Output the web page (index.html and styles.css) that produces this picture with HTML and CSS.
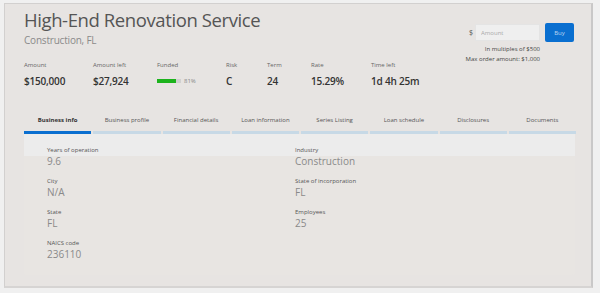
FILE: index.html
```html
<!DOCTYPE html>
<html lang="en">

<head>
    <meta charset="UTF-8">
    <title>High-End Renovation Service</title>
    <link rel="stylesheet" href="styles.css">
</head>

<body>
    <div class="card">
        <div class="top">
            <div class="heading">
                <h1>High-End Renovation Service</h1>
                <div class="subtitle">Construction, FL</div>
            </div>
            <div class="order">
                <div class="order-row">
                    <span class="currency">$</span>
                    <input class="amount" type="text" placeholder="Amount">
                    <button class="buy">Buy</button>
                </div>
                <div class="order-note">In multiples of $500</div>
                <div class="order-note">Max order amount: $1,000</div>
            </div>
        </div>

        <div class="stats">
            <div class="stat s-amount">
                <div class="stat-label">Amount</div>
                <div class="stat-value">$150,000</div>
            </div>
            <div class="stat s-left">
                <div class="stat-label">Amount left</div>
                <div class="stat-value">$27,924</div>
            </div>
            <div class="stat s-funded">
                <div class="stat-label">Funded</div>
                <div class="funded">
                    <div class="bar"><div class="bar-fill" style="width: 81%"></div></div>
                    <span class="funded-pct">81%</span>
                </div>
            </div>
            <div class="stat s-risk">
                <div class="stat-label">Risk</div>
                <div class="stat-value">C</div>
            </div>
            <div class="stat s-term">
                <div class="stat-label">Term</div>
                <div class="stat-value">24</div>
            </div>
            <div class="stat s-rate">
                <div class="stat-label">Rate</div>
                <div class="stat-value">15.29%</div>
            </div>
            <div class="stat s-time">
                <div class="stat-label">Time left</div>
                <div class="stat-value">1d 4h 25m</div>
            </div>
        </div>

        <div class="tabs">
            <div class="tab active">Business info</div>
            <div class="tab">Business profile</div>
            <div class="tab">Financial details</div>
            <div class="tab">Loan information</div>
            <div class="tab">Series Listing</div>
            <div class="tab">Loan schedule</div>
            <div class="tab">Disclosures</div>
            <div class="tab">Documents</div>
        </div>

        <div class="panel">
            <div class="info-row">
                <div class="info">
                    <div class="info-label">Years of operation</div>
                    <div class="info-value">9.6</div>
                </div>
                <div class="info">
                    <div class="info-label">Industry</div>
                    <div class="info-value">Construction</div>
                </div>
            </div>
            <div class="info-row">
                <div class="info">
                    <div class="info-label">City</div>
                    <div class="info-value">N/A</div>
                </div>
                <div class="info">
                    <div class="info-label">State of incorporation</div>
                    <div class="info-value">FL</div>
                </div>
            </div>
            <div class="info-row">
                <div class="info">
                    <div class="info-label">State</div>
                    <div class="info-value">FL</div>
                </div>
                <div class="info">
                    <div class="info-label">Employees</div>
                    <div class="info-value">25</div>
                </div>
            </div>
            <div class="info-row">
                <div class="info">
                    <div class="info-label">NAICS code</div>
                    <div class="info-value">236110</div>
                </div>
            </div>
        </div>
    </div>
</body>

</html>
```

FILE: styles.css
```css
body {
    margin: 0;
    padding: 3px 7px 6px 4px;
    background: #f0f0f0;
    font-family: 'Open Sans', 'Noto Sans', sans-serif;
    color: #333;
}

.card {
    background: #e7e4e2;
    border: 1px solid #d2d0cf;
    border-right: 2px solid #c9c8c8;
    border-bottom: 2px solid #d6d4d3;
    padding: 5px 15px 0 19px;
    height: 285px;
    box-sizing: border-box;
}

.top {
    display: flex;
    justify-content: space-between;
    height: 52px;
}

h1 {
    margin: 0;
    font-weight: 400;
    font-size: 18.5px;
    line-height: 22px;
    letter-spacing: -0.4px;
    color: #555;
}

.subtitle {
    margin-top: 3px;
    font-size: 10px;
    line-height: 12px;
    color: #8a8a8a;
    letter-spacing: -0.2px;
}

.order {
    display: flex;
    flex-direction: column;
    align-items: flex-end;
    padding-top: 14px;
    padding-right: 2px;
}

.order-row {
    display: flex;
    align-items: center;
    margin-bottom: 2px;
}

.currency {
    font-size: 7px;
    color: #555;
    margin-right: 2px;
}

.amount {
    width: 65px;
    height: 17px;
    box-sizing: border-box;
    border: 1px solid #e4e4e4;
    background: #efefef;
    font-family: inherit;
    font-size: 6px;
    padding: 0 0 0 5px;
    margin-right: 5px;
}

.amount::placeholder {
    color: #aaa;
}

.buy {
    width: 29px;
    height: 19px;
    border: none;
    border-radius: 2px;
    background: #0a6fd0;
    color: #bcd6f0;
    font-family: inherit;
    font-size: 6px;
    padding: 0;
}

.order-note {
    font-size: 6px;
    line-height: 10px;
    color: #444;
    margin-right: 34px;
}

.stats {
    display: flex;
}

.stat-label {
    font-size: 6px;
    line-height: 8px;
    color: #666;
    margin-bottom: 6px;
}

.stat-value {
    font-size: 10px;
    line-height: 12px;
    font-weight: 600;
    color: #333;
    letter-spacing: -0.2px;
}

.s-amount { width: 69px; }
.s-left { width: 64px; }
.s-funded { width: 69px; }
.s-risk { width: 41px; }
.s-term { width: 44px; }
.s-rate { width: 60px; }

.funded {
    display: flex;
    align-items: center;
    height: 12px;
}

.bar {
    width: 24px;
    height: 4px;
    background: #d0d0d0;
    margin-right: 3px;
}

.bar-fill {
    height: 100%;
    background: #1db31d;
}

.funded-pct {
    font-size: 6px;
    color: #888;
}

.tabs {
    display: flex;
    gap: 2px;
    margin-top: 29px;
}

.tab {
    flex: 1;
    text-align: center;
    font-size: 6px;
    line-height: 8px;
    color: #555;
    padding-bottom: 7px;
    border-bottom: 3px solid #c7d9e6;
}

.tab.active {
    font-weight: 700;
    color: #333;
    border-bottom-color: #0a6fd0;
}

.panel {
    background: linear-gradient(#ececec 0, #ececec 22px, #e8e5e2 22px);
    height: 141px;
    box-sizing: border-box;
    padding-top: 12px;
    border-radius: 0 0 3px 3px;
    margin-right: 1px;
}

.info-row {
    display: flex;
    padding: 0 23px 9px;
}

.info {
    width: 248px;
}

.info-label {
    font-size: 6px;
    line-height: 8px;
    color: #555;
}

.info-value {
    font-size: 10px;
    line-height: 14px;
    color: #8a8a8a;
}
```
